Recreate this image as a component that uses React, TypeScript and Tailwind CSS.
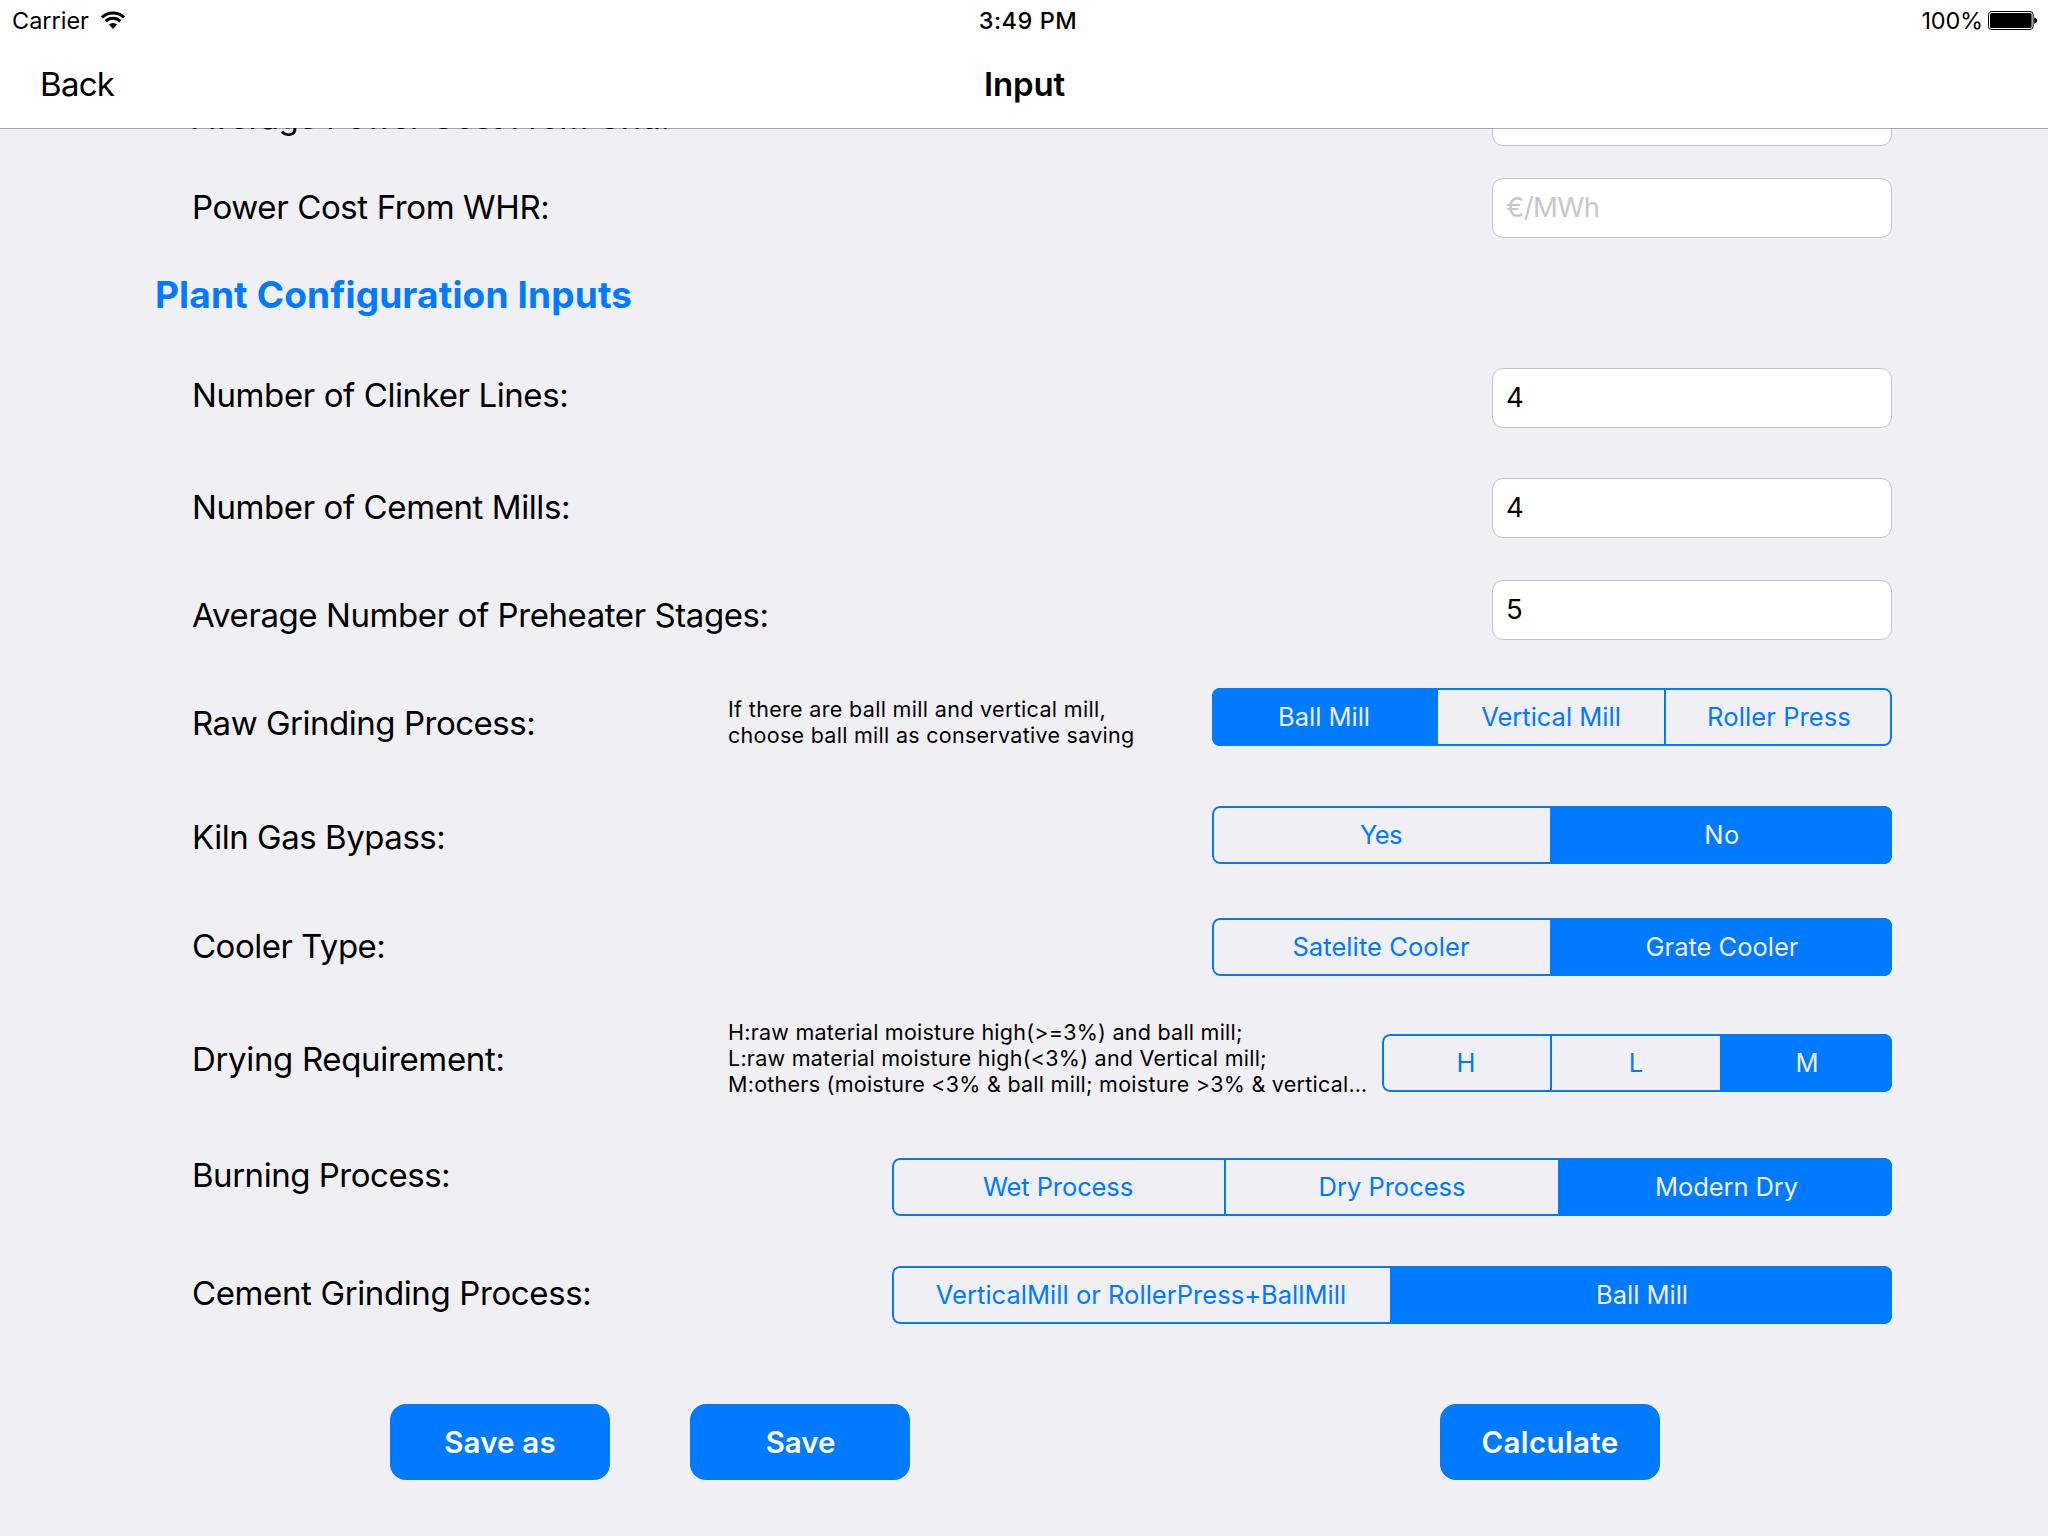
import React, { useState } from "react";

type Segment = { text: string; size: string };

function WifiIcon() {
  return (
    <svg width="26" height="18" viewBox="0 0 26 18" fill="none" className="mt-[10px] ml-[11px]">
      <path d="M1.9 6.3 A16.2 16.2 0 0 1 24.1 6.3" stroke="#000" strokeWidth="3" />
      <path d="M5.6 10.3 A10.6 10.6 0 0 1 20.4 10.3" stroke="#000" strokeWidth="2.9" />
      <path d="M13 17.9 L8.9 13.6 A5.9 5.9 0 0 1 17.1 13.6 Z" fill="#000" />
    </svg>
  );
}

function BatteryIcon() {
  return (
    <svg width="50" height="19" viewBox="0 0 50 19" fill="none" className="mt-[10px] ml-[5px]">
      <rect x="0.5" y="0.5" width="44.6" height="18" rx="3" stroke="#000" />
      <rect x="2" y="2" width="41.6" height="15" rx="1.6" fill="#000" />
      <path d="M46.2 6.3 C48 6.8 49.2 7.9 49.2 9.5 C49.2 11.1 48 12.2 46.2 12.7 Z" fill="#000" />
    </svg>
  );
}

function Row({
  height,
  label,
  labelClass,
  note,
  children,
}: {
  height: string;
  label: string;
  labelClass: string;
  note?: React.ReactNode;
  children: React.ReactNode;
}) {
  return (
    <div className={`flex items-start pl-48 pr-[156px] ${height}`}>
      <div className={`shrink-0 text-[33px] leading-10 whitespace-nowrap ${note ? "w-[536px]" : ""} ${labelClass}`}>
        {label}
      </div>
      {note}
      <div className="ml-auto shrink-0">{children}</div>
    </div>
  );
}

function Field({ value = "", placeholder, className }: { value?: string; placeholder?: string; className: string }) {
  return (
    <input
      defaultValue={value}
      placeholder={placeholder}
      className={`block h-[60px] w-[400px] rounded-[11px] border border-[#c5c5c9] bg-white pt-0 pb-[2px] pl-[13px] text-[27.5px] text-black outline-none placeholder:tracking-[-0.6px] placeholder:text-[#c7c7cd] placeholder:opacity-100 ${className}`}
    />
  );
}

function Segmented({ segments, initial, className }: { segments: Segment[]; initial: number; className: string }) {
  const [active, setActive] = useState(initial);
  return (
    <div className={`relative flex h-[58px] overflow-hidden rounded-[8px] text-[25.5px] ${className}`}>
      {segments.map((s, i) => (
        <button
          key={s.text}
          onClick={() => setActive(i)}
          className={`flex h-full items-center justify-center whitespace-nowrap ${s.size} ${
            i < segments.length - 1 ? "border-r-2 border-[#007aff]" : ""
          } ${i === active ? "bg-[#007aff] text-[#efeff4]" : "text-[#007aff]"}`}
        >
          {s.text}
        </button>
      ))}
      <div className="pointer-events-none absolute inset-0 rounded-[8px] border-2 border-[#007aff]" />
    </div>
  );
}

function Action({ children, className }: { children: string; className: string }) {
  return (
    <button
      className={`h-[76px] w-[220px] rounded-[16px] bg-[#007aff] text-[29.5px] font-semibold text-white ${className}`}
    >
      {children}
    </button>
  );
}

export default function App() {
  return (
    <div className="flex h-[1536px] w-[2048px] flex-col overflow-hidden bg-[#efeff4] font-['Inter',sans-serif] text-black">
      <header className="h-32 shrink-0 bg-white">
        <div className="grid h-[41px] grid-cols-3 pt-px text-[23.5px] leading-10">
          <div className="flex pl-3">
            <span className="tracking-[-0.02px]">Carrier</span>
            <WifiIcon />
          </div>
          <div className="pl-2 text-center font-medium tracking-[0.55px]">3:49 PM</div>
          <div className="flex justify-end pr-[10px]">
            <span className="tracking-[-0.2px]">100%</span>
            <BatteryIcon />
          </div>
        </div>
        <div className="mt-[23px] grid grid-cols-3 text-[33px] leading-10">
          <button className="pl-10 text-left tracking-[-0.7px]">Back</button>
          <h1 className="pl-px text-center font-semibold tracking-[-0.2px]">Input</h1>
        </div>
      </header>

      <main className="relative flex grow flex-col overflow-hidden">
        {/* translucent hairline under the navigation bar, above the scrolled rows */}
        <div className="absolute inset-x-0 top-0 h-px bg-black/30" />
        <Row height="h-8" label="Average Power Cost From Grid:" labelClass="-mt-[31px] tracking-[-0.42px]">
          <Field className="-mt-[42px]" />
        </Row>
        <Row height="h-[90px]" label="Power Cost From WHR:" labelClass="mt-[27px] tracking-[-0.38px]">
          <Field placeholder="€/MWh" className="mt-[18px]" />
        </Row>
        <h2 className="h-[100px] pt-[22px] pl-[155px] text-[37px] leading-[45px] font-bold tracking-[0.15px] text-[#007aff]">
          Plant Configuration Inputs
        </h2>
        <Row height="h-[110px]" label="Number of Clinker Lines:" labelClass="mt-[25px] tracking-[-0.4px]">
          <Field value="4" className="mt-[18px]" />
        </Row>
        <Row height="h-[100px]" label="Number of Cement Mills:" labelClass="mt-[27px] tracking-[-0.41px]">
          <Field value="4" className="mt-[18px]" />
        </Row>
        <Row height="h-[110px]" label="Average Number of Preheater Stages:" labelClass="mt-[35px] tracking-[-0.42px]">
          <Field value="5" className="mt-5" />
        </Row>
        <Row
          height="h-[110px]"
          label="Raw Grinding Process:"
          labelClass="mt-[33px] tracking-[-0.48px]"
          note={
            <div className="mt-[26px] text-[21.5px] leading-[26px] whitespace-nowrap">
              <p className="tracking-[0.33px]">If there are ball mill and vertical mill,</p>
              <p className="tracking-[0.28px]">choose ball mill as conservative saving</p>
            </div>
          }
        >
          <Segmented
            className="mt-[18px]"
            initial={0}
            segments={[
              { text: "Ball Mill", size: "w-[226px]" },
              { text: "Vertical Mill", size: "w-[228px]" },
              { text: "Roller Press", size: "w-[226px] tracking-[0.1px]" },
            ]}
          />
        </Row>
        <Row height="h-[110px]" label="Kiln Gas Bypass:" labelClass="mt-[37px] tracking-[-0.47px]">
          <Segmented
            className="mt-[26px]"
            initial={1}
            segments={[
              { text: "Yes", size: "w-[340px] tracking-[-0.6px]" },
              { text: "No", size: "w-[340px] tracking-[0.4px]" },
            ]}
          />
        </Row>
        <Row height="h-[110px]" label="Cooler Type:" labelClass="mt-9 tracking-[-0.5px]">
          <Segmented
            className="mt-7"
            initial={1}
            segments={[
              { text: "Satelite Cooler", size: "w-[340px] tracking-[0.08px]" },
              { text: "Grate Cooler", size: "w-[340px]" },
            ]}
          />
        </Row>
        <Row
          height="h-[130px]"
          label="Drying Requirement:"
          labelClass="mt-[39px] tracking-[-0.34px]"
          note={
            <div className="mt-[19px] text-[21.5px] leading-[26px] tracking-[0.255px] whitespace-nowrap">
              <p className="tracking-[0.244px]">H:raw material moisture high(&gt;=3%) and ball mill;</p>
              <p>L:raw material moisture high(&lt;3%) and Vertical mill;</p>
              <p>M:others (moisture &lt;3% &amp; ball mill; moisture &gt;3% &amp; vertical…</p>
            </div>
          }
        >
          <Segmented
            className="mt-[34px]"
            initial={2}
            segments={[
              { text: "H", size: "w-[170px]" },
              { text: "L", size: "w-[170px]" },
              { text: "M", size: "w-[170px]" },
            ]}
          />
        </Row>
        <Row height="h-[110px]" label="Burning Process:" labelClass="mt-[25px] tracking-[-0.474px]">
          <Segmented
            className="mt-7"
            initial={2}
            segments={[
              { text: "Wet Process", size: "w-[334px] tracking-[-0.1px]" },
              { text: "Dry Process", size: "w-[334px]" },
              { text: "Modern Dry", size: "w-[332px] pl-px tracking-[-0.094px]" },
            ]}
          />
        </Row>
        <Row height="h-[110px]" label="Cement Grinding Process:" labelClass="mt-[33px] tracking-[-0.38px]">
          <Segmented
            className="mt-[26px]"
            initial={1}
            segments={[
              { text: "VerticalMill or RollerPress+BallMill", size: "w-[500px] tracking-[0.03px]" },
              { text: "Ball Mill", size: "w-[500px]" },
            ]}
          />
        </Row>
        <div className="mt-[54px] flex pr-[388px] pl-[390px]">
          <Action className="tracking-[0.16px]">Save as</Action>
          <Action className="ml-20 pl-px tracking-[-0.07px]">Save</Action>
          <Action className="ml-auto tracking-[0.36px]">Calculate</Action>
        </div>
      </main>
    </div>
  );
}
